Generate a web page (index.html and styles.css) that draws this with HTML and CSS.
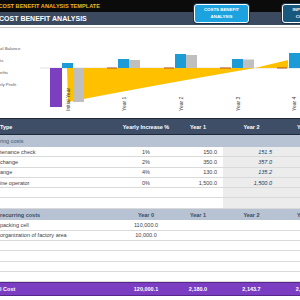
FILE: index.html
```html
<!DOCTYPE html>
<html lang="en">
<head>
    <meta charset="UTF-8">
    <title>Cost Benefit Analysis</title>
    <link rel="stylesheet" href="styles.css">
</head>
<body>
    <div class="sheet">
        <header class="banner">
            <div class="banner-top">COST BENEFIT ANALYSIS TEMPLATE</div>
            <div class="banner-main">COST BENEFIT ANALYSIS</div>
            <a class="nav-btn nav-active">COSTS BENEFIT<br>ANALYSIS</a>
            <a class="nav-btn nav-input">INPUT COSTS &amp;<br>CONDITIONS</a>
        </header>
        <div class="rule"></div>

        <svg class="chart" viewBox="0 28 300 90" width="300" height="90">
            <text class="legend" x="0" y="49.5">al Balance</text>
            <text class="legend" x="0" y="61.5">ts</text>
            <text class="legend" x="0" y="73.5">efits</text>
            <text class="legend" x="0" y="85.5">rly Profit</text>

            <line x1="40" y1="68" x2="300" y2="68" stroke="#d9d9d9" stroke-width="0.8"/>

            <!-- cumulative balance -->
            <path d="M67 68 H255 Q150 86 68 102 Z" fill="#ffc000"/>
            <path d="M255 68 L288 60 V68 Z" fill="#ffc000"/>

            <!-- initial year -->
            <rect x="50" y="68" width="12" height="39" fill="#7d3fc2"/>
            <rect x="62" y="63" width="11" height="5" fill="#1c9bd6"/>
            <rect x="73" y="68" width="11" height="34" fill="#bfbfbf"/>

            <!-- yearly profit -->
            <rect x="107" y="67.5" width="10" height="1" fill="#b3532e"/>
            <rect x="164" y="67.5" width="10" height="1" fill="#b3532e"/>
            <rect x="220" y="67.5" width="11" height="1" fill="#b3532e"/>
            <rect x="277" y="67.5" width="10" height="1" fill="#b3532e"/>

            <!-- benefits / costs -->
            <rect x="118" y="59" width="11" height="9" fill="#1c9bd6"/>
            <rect x="129" y="60" width="11" height="8" fill="#bfbfbf"/>
            <rect x="175" y="54" width="11" height="14" fill="#1c9bd6"/>
            <rect x="186" y="55" width="11" height="13" fill="#bfbfbf"/>
            <rect x="232" y="59" width="11" height="9" fill="#1c9bd6"/>
            <rect x="243" y="59.5" width="11" height="8.5" fill="#bfbfbf"/>
            <rect x="289" y="53" width="11" height="15" fill="#1c9bd6"/>

            <text class="axis" transform="translate(70 111) rotate(-90)">Initial Year</text>
            <text class="axis" transform="translate(126 111) rotate(-90)">Year 1</text>
            <text class="axis" transform="translate(183 111) rotate(-90)">Year 2</text>
            <text class="axis" transform="translate(239.5 111) rotate(-90)">Year 3</text>
            <text class="axis" transform="translate(296 111) rotate(-90)">Year 4</text>
        </svg>

        <div class="grid">
            <div class="row head">
                <span class="c1">Type</span>
                <span class="c2">Yearly Increase %</span>
                <span class="c3 mid">Year 1</span>
                <span class="c4 mid">Year 2</span>
                <span class="c5">Year 3</span>
            </div>
            <div class="row group">
                <span class="c1">ring costs</span>
            </div>
            <div class="row item recurring">
                <span class="c1">tenance check</span>
                <span class="c2">1%</span>
                <span class="c3">150.0</span>
                <span class="c4">151.5</span>
                <span class="c5"></span>
            </div>
            <div class="row item recurring">
                <span class="c1">change</span>
                <span class="c2">2%</span>
                <span class="c3">350.0</span>
                <span class="c4">357.0</span>
                <span class="c5"></span>
            </div>
            <div class="row item recurring">
                <span class="c1">ange</span>
                <span class="c2">4%</span>
                <span class="c3">130.0</span>
                <span class="c4">135.2</span>
                <span class="c5"></span>
            </div>
            <div class="row item recurring">
                <span class="c1">ine operator</span>
                <span class="c2">0%</span>
                <span class="c3">1,500.0</span>
                <span class="c4">1,500.0</span>
                <span class="c5"></span>
            </div>
            <div class="row item recurring">
                <span class="c1"></span><span class="c2"></span><span class="c3"></span><span class="c4"></span><span class="c5"></span>
            </div>
            <div class="row item recurring">
                <span class="c1"></span><span class="c2"></span><span class="c3"></span><span class="c4"></span><span class="c5"></span>
            </div>

            <div class="row group group-strong">
                <span class="c1">recurring costs</span>
                <span class="c2">Year 0</span>
                <span class="c3 mid">Year 1</span>
                <span class="c4 mid">Year 2</span>
                <span class="c5">Year 3</span>
            </div>
            <div class="row item">
                <span class="c1">packing cell</span>
                <span class="c2">110,000.0</span>
            </div>
            <div class="row item">
                <span class="c1">organization of factory area</span>
                <span class="c2">10,000.0</span>
            </div>
            <div class="row item"></div>
            <div class="row item"></div>
            <div class="row item"></div>
            <div class="row item"></div>

            <div class="row total">
                <span class="c1">l Cost</span>
                <span class="c2">120,000.1</span>
                <span class="c3 mid">2,180.0</span>
                <span class="c4 mid">2,143.7</span>
                <span class="c5">2,107.9</span>
            </div>
        </div>
    </div>
</body>
</html>
```

FILE: styles.css
```css
body {
    margin: 0;
    font-family: "Liberation Sans", Arial, sans-serif;
    background-color: #fff;
    overflow: hidden;
}
.sheet {
    width: 300px;
    height: 300px;
    overflow: hidden;
}
.banner {
    position: relative;
}
.banner-top {
    height: 12px;
    line-height: 12px;
    background-color: #0b0b0b;
    color: #e8b826;
    font-size: 5.6px;
    font-weight: bold;
    text-indent: -1.5px;
    white-space: nowrap;
}
.banner-main {
    height: 13px;
    line-height: 13px;
    background-color: #3b4a5f;
    color: #fff;
    font-size: 7px;
    font-weight: bold;
    text-indent: -1px;
    white-space: nowrap;
}
.nav-btn {
    position: absolute;
    top: 4px;
    width: 55px;
    height: 19px;
    box-sizing: border-box;
    display: flex;
    align-items: center;
    justify-content: center;
    text-align: center;
    border: 1px solid #fff;
    border-radius: 3px;
    box-shadow: 0 0 0 1px #1b344d;
    color: #fff;
    font-size: 4.4px;
    font-weight: bold;
    line-height: 6.5px;
    white-space: nowrap;
}
.nav-active {
    left: 194px;
    background-color: #1ca2df;
}
.nav-input {
    left: 282px;
    background-color: #17587f;
}
.rule {
    height: 1px;
    margin-top: 2px;
    background-color: #c4c4c4;
}
.chart {
    display: block;
}
.chart .legend {
    font-size: 4.4px;
    fill: #595959;
}
.chart .axis {
    font-size: 5px;
    fill: #404040;
}

.grid {
    font-size: 5.5px;
    color: #404040;
}
.row {
    display: grid;
    grid-template-columns: 119px 54px 50px 57px 50px;
    width: 330px;
    box-sizing: border-box;
    white-space: nowrap;
}
.row span {
    display: flex;
    align-items: center;
    overflow: hidden;
}
.c1 {
    justify-content: flex-start;
}
.c2 {
    justify-content: center;
}
.c3 {
    justify-content: flex-end;
    padding-right: 6px;
}
.c4 {
    justify-content: flex-end;
    padding-right: 8px;
}
.c5 {
    justify-content: center;
}
.row .mid {
    justify-content: center;
    padding-right: 0;
}
.head {
    height: 17px;
    background-color: #3e4e66;
    border-top: 1px solid #1e2a3a;
    border-bottom: 1px solid #1e2a3a;
    color: #fff;
    font-weight: bold;
}
.group {
    height: 12px;
    background-color: #b7c3d3;
    color: #4a5568;
}
.group-strong {
    height: 11.7px;
    color: #3b4a5f;
    font-weight: bold;
}
.item {
    height: 10.3px;
    border-bottom: 1px solid #dadada;
}
.recurring .c4,
.recurring .c5 {
    background-color: #ececec;
    color: #1f3a62;
    font-style: italic;
}
.total {
    height: 13.3px;
    background-color: #7b3dc1;
    border-top: 1px solid #55288a;
    border-bottom: 1px solid #55288a;
    color: #fff;
    font-weight: bold;
}
```
